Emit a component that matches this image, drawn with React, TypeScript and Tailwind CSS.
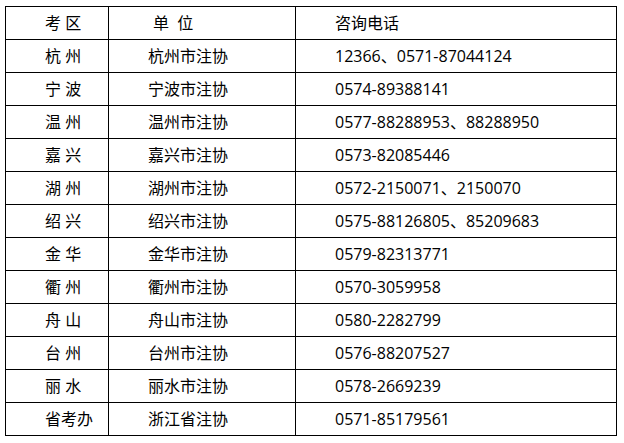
const rows: [string, string, string][] = [
  ["杭 州", "杭州市注协", "12366、0571-87044124"],
  ["宁 波", "宁波市注协", "0574-89388141"],
  ["温 州", "温州市注协", "0577-88288953、88288950"],
  ["嘉 兴", "嘉兴市注协", "0573-82085446"],
  ["湖 州", "湖州市注协", "0572-2150071、2150070"],
  ["绍 兴", "绍兴市注协", "0575-88126805、85209683"],
  ["金 华", "金华市注协", "0579-82313771"],
  ["衢 州", "衢州市注协", "0570-3059958"],
  ["舟 山", "舟山市注协", "0580-2282799"],
  ["台 州", "台州市注协", "0576-88207527"],
  ["丽 水", "丽水市注协", "0578-2669239"],
  ["省考办", "浙江省注协", "0571-85179561"],
];

const cell = "h-[33px] flex items-center border-r border-b border-black pl-[39px] whitespace-pre";

export default function App() {
  return (
    <div className="w-[624px] h-[443px] bg-white pl-[5px] pt-[6px] text-black text-[16px] font-['Open_Sans','Noto_Sans_CJK_SC',sans-serif]">
      <div className="grid grid-cols-[103px_187px_321px] w-fit border-l border-t border-black">
        <div className={cell}>考 区</div>
        <div className={`${cell} !pl-[44px]`}>单{"\u00a0\u00a0"}位</div>
        <div className={cell}>咨询电话</div>
        {rows.map(([area, org, phone]) => (
          <div key={area} className="contents">
            <div className={cell}>{area}</div>
            <div className={cell}>{org}</div>
            <div className={cell}>{phone}</div>
          </div>
        ))}
      </div>
    </div>
  );
}
